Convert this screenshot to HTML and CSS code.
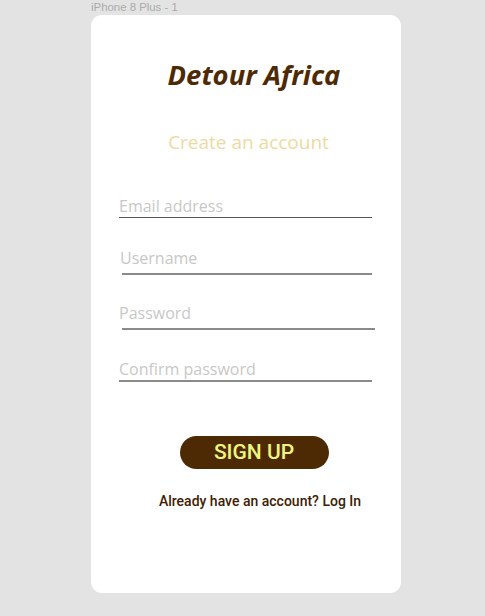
FILE: index.html
```html
<!DOCTYPE html>
<html>
<head>
<meta charset="utf-8">
<link rel="stylesheet" href="styles.css">
</head>
<body>
<div class="artboard-label">iPhone 8 Plus - 1</div>
<main class="card">
  <h1 class="title">Detour Africa</h1>
  <h2 class="subtitle">Create an account</h2>
  <form class="form">
    <div class="field f-email"><span class="placeholder">Email address</span></div>
    <div class="field f-user"><span class="placeholder">Username</span></div>
    <div class="field f-pass"><span class="placeholder">Password</span></div>
    <div class="field f-confirm"><span class="placeholder">Confirm password</span></div>
  </form>
  <button class="signup" type="button">SIGN UP</button>
  <p class="login">Already have an account? Log In</p>
</main>
</body>
</html>
```

FILE: styles.css
```css
html, body {
  margin: 0;
  padding: 0;
  background: #e3e3e3;
}
body {
  width: 485px;
  height: 616px;
  overflow: hidden;
  padding-left: 91px;
  box-sizing: border-box;
}
.artboard-label {
  font-family: "Liberation Sans", Arial, sans-serif;
  font-size: 11.4px;
  line-height: 14px;
  color: #ababab;
  height: 15px;
}
.card {
  width: 310px;
  height: 578px;
  background: #ffffff;
  border-radius: 11px;
  display: flex;
  flex-direction: column;
  box-sizing: border-box;
  padding-top: 41px;
}
.title {
  margin: 0;
  font-family: "Open Sans", sans-serif;
  font-weight: 700;
  font-style: italic;
  font-size: 27.4px;
  line-height: 38px;
  color: #4e2a04;
  text-align: center;
  padding-left: 16px;
}
.subtitle {
  margin: 35px 0 0;
  font-family: "Open Sans", sans-serif;
  font-weight: 400;
  font-size: 19px;
  line-height: 26px;
  color: #f0d9a0;
  text-align: center;
  padding-left: 5px;
}
.form {
  display: flex;
  flex-direction: column;
  margin-top: 40px;
}
.field {
  font-family: "Open Sans", sans-serif;
  font-size: 16px;
  line-height: 22px;
  color: #c8c8c8;
  width: 253px;
  margin-left: 28px;
}
.field .placeholder {
  display: block;
}
.f-email { border-bottom: 1.5px solid #555555; }
.f-user {
  margin-top: 29px;
  margin-left: 31px;
  width: 250px;
  border-bottom: 2px solid #8a8a8a;
}
.f-user .placeholder { margin-left: -2px; padding-bottom: 4px; }
.f-pass {
  margin-top: 27px;
  margin-left: 31px;
  width: 253px;
  border-bottom: 2px solid #8a8a8a;
}
.f-pass .placeholder { margin-left: -3px; padding-bottom: 4px; }
.f-confirm { margin-top: 28px; border-bottom: 2px solid #8a8a8a; }
.signup {
  align-self: center;
  margin: 54px 0 0 16px;
  width: 149px;
  height: 33px;
  border: none;
  border-radius: 17px;
  background: #4e2a04;
  color: #eef57f;
  font-family: Roboto, sans-serif;
  font-weight: 500;
  font-size: 21px;
  line-height: 33px;
  padding: 0;
}
.login {
  margin: 23px 0 0 28px;
  text-align: center;
  font-family: Roboto, sans-serif;
  font-weight: 500;
  font-size: 14px;
  line-height: 18px;
  color: #3e2003;
}
```
